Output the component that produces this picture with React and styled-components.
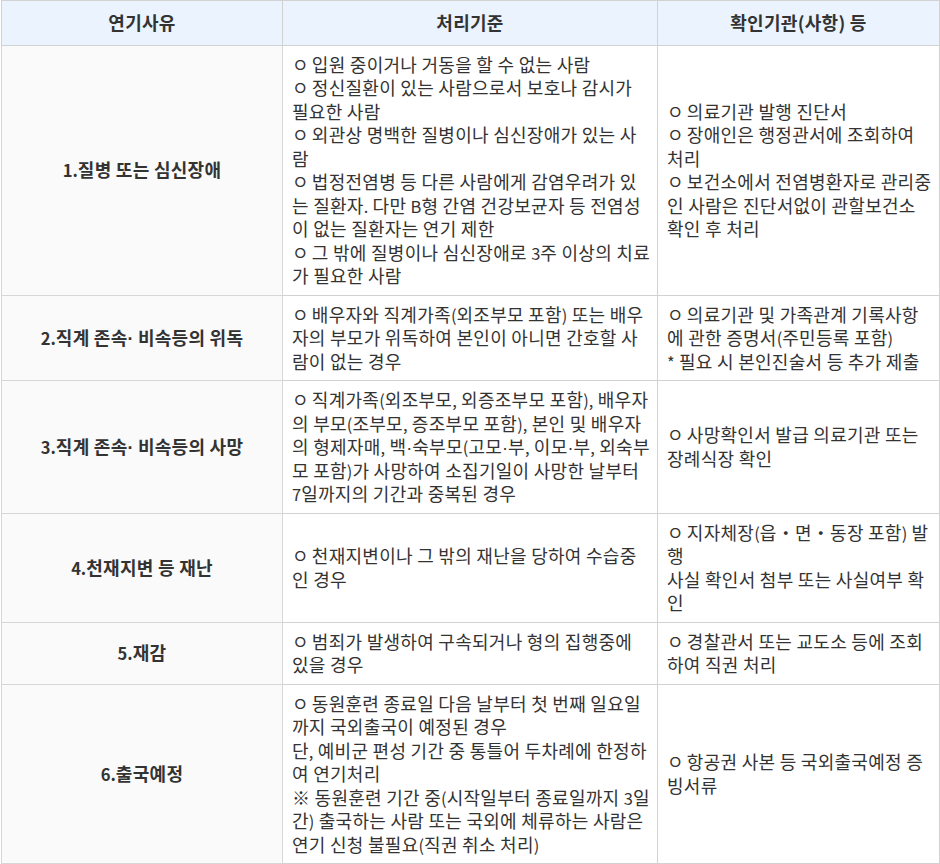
import React from "react";
import styled, { createGlobalStyle } from "styled-components";

const Global = createGlobalStyle`
  html, body { margin: 0; padding: 0; background: #ffffff; }
  body { font-family: "Noto Sans CJK KR", "Noto Sans", sans-serif; }
`;

const Wrap = styled.div`
  padding: 0 1px;
`;

const Table = styled.table`
  width: 938px;
  border-collapse: collapse;
  table-layout: fixed;
  border: 1px solid #c8c8c8;
  font-family: "Noto Sans CJK KR", "Noto Sans", sans-serif;
  font-size: 18px;
  line-height: 23.5px;
  letter-spacing: 0.28px;
  color: #333333;
`;

const Th = styled.th`
  background: #eaf3fe;
  font-weight: 700;
  text-align: center;
  vertical-align: middle;
  padding: 10px 8px;
  border: 1px solid #d2d2d2;
  color: #333333;
`;

const Reason = styled.td`
  background: #fafafa;
  font-weight: 700;
  text-align: center;
  vertical-align: middle;
  padding: 7px 8px;
  border: 1px solid #d6d6d6;
`;

const Cell = styled.td`
  background: #ffffff;
  text-align: left;
  vertical-align: middle;
  padding: 7px 6px 7px 9px;
  border: 1px solid #d2d2d2;
  word-break: normal;
`;

const Bullet = styled.span`
  padding-right: 3px;
`;

const Latin = styled.span`
  font-size: 16.5px;
  line-height: 1;
  letter-spacing: 0;
`;

const Dot = styled.span`
  font-family: "Liberation Sans", "Noto Sans", sans-serif;
  line-height: 1;
  letter-spacing: 0;
`;

const rows = [
  {
    reason: "1.질병 또는 심신장애",
    rule: [
      "ㅇ입원 중이거나 거동을 할 수 없는 사람",
      "ㅇ정신질환이 있는 사람으로서 보호나 감시가 필요한 사람",
      "ㅇ외관상 명백한 질병이나 심신장애가 있는 사람",
      "ㅇ법정전염병 등 다른 사람에게 감염우려가 있는 질환자. 다만 B형 간염 건강보균자 등 전염성이 없는 질환자는 연기 제한",
      "ㅇ그 밖에 질병이나 심신장애로 3주 이상의 치료가 필요한 사람",
    ],
    check: [
      "ㅇ의료기관 발행 진단서",
      "ㅇ장애인은 행정관서에 조회하여 처리",
      "ㅇ보건소에서 전염병환자로 관리중인 사람은 진단서없이 관할보건소 확인 후 처리",
    ],
  },
  {
    reason: "2.직계 존속· 비속등의 위독",
    rule: [
      "ㅇ배우자와 직계가족(외조부모 포함) 또는 배우자의 부모가 위독하여 본인이 아니면 간호할 사람이 없는 경우",
    ],
    check: [
      "ㅇ의료기관 및 가족관계 기록사항에 관한 증명서(주민등록 포함)",
      "* 필요 시 본인진술서 등 추가 제출",
    ],
  },
  {
    reason: "3.직계 존속· 비속등의 사망",
    rule: [
      "ㅇ직계가족(외조부모, 외증조부모 포함), 배우자의 부모(조부모, 증조부모 포함), 본인 및 배우자의 형제자매, 백·숙부모(고모·부, 이모·부, 외숙부모 포함)가 사망하여 소집기일이 사망한 날부터 7일까지의 기간과 중복된 경우",
    ],
    check: ["ㅇ사망확인서 발급 의료기관 또는 장례식장 확인"],
  },
  {
    reason: "4.천재지변 등 재난",
    rule: ["ㅇ천재지변이나 그 밖의 재난을 당하여 수습중인 경우"],
    check: [
      "ㅇ지자체장(읍・면・동장 포함) 발행",
      "사실 확인서 첨부 또는 사실여부 확인",
    ],
  },
  {
    reason: "5.재감",
    rule: ["ㅇ범죄가 발생하여 구속되거나 형의 집행중에 있을 경우"],
    check: ["ㅇ경찰관서 또는 교도소 등에 조회하여 직권 처리"],
  },
  {
    reason: "6.출국예정",
    rule: [
      "ㅇ동원훈련 종료일 다음 날부터 첫 번째 일요일까지 국외출국이 예정된 경우",
      "단, 예비군 편성 기간 중 통틀어 두차례에 한정하여 연기처리",
      "※ 동원훈련 기간 중(시작일부터 종료일까지 3일간) 출국하는 사람 또는 국외에 체류하는 사람은 연기 신청 불필요(직권 취소 처리)",
    ],
    check: ["ㅇ항공권 사본 등 국외출국예정 증빙서류"],
  },
];

// Latin letters, digits and ASCII punctuation are set a little smaller than Hangul
const TOKEN = /([A-Za-z0-9(),.*]+|·)/;

const Text = ({ children }) =>
  children
    .split(TOKEN)
    .filter((p) => p !== "")
    .map((p, i) => {
      if (p === "·") return <Dot key={i}>·</Dot>;
      if (/^[A-Za-z0-9(),.*]+$/.test(p)) return <Latin key={i}>{p}</Latin>;
      return <React.Fragment key={i}>{p}</React.Fragment>;
    });

const Line = ({ text }) => {
  if (text.startsWith("ㅇ")) {
    return (
      <>
        <Bullet>ㅇ</Bullet>
        <Text>{text.slice(1)}</Text>
      </>
    );
  }
  return <Text>{text}</Text>;
};

const Lines = ({ items }) =>
  items.map((t, i) => (
    <React.Fragment key={i}>
      {i > 0 && <br />}
      <Line text={t} />
    </React.Fragment>
  ));

export default function App() {
  return (
    <>
      <Global />
      <Wrap>
        <Table>
          <colgroup>
            <col style={{ width: "281px" }} />
            <col style={{ width: "375px" }} />
            <col style={{ width: "282px" }} />
          </colgroup>
          <thead>
            <tr>
              <Th>연기사유</Th>
              <Th>처리기준</Th>
              <Th>확인기관(사항) 등</Th>
            </tr>
          </thead>
          <tbody>
            {rows.map((r) => (
              <tr key={r.reason}>
                <Reason>
                  <Text>{r.reason}</Text>
                </Reason>
                <Cell>
                  <Lines items={r.rule} />
                </Cell>
                <Cell>
                  <Lines items={r.check} />
                </Cell>
              </tr>
            ))}
          </tbody>
        </Table>
      </Wrap>
    </>
  );
}
